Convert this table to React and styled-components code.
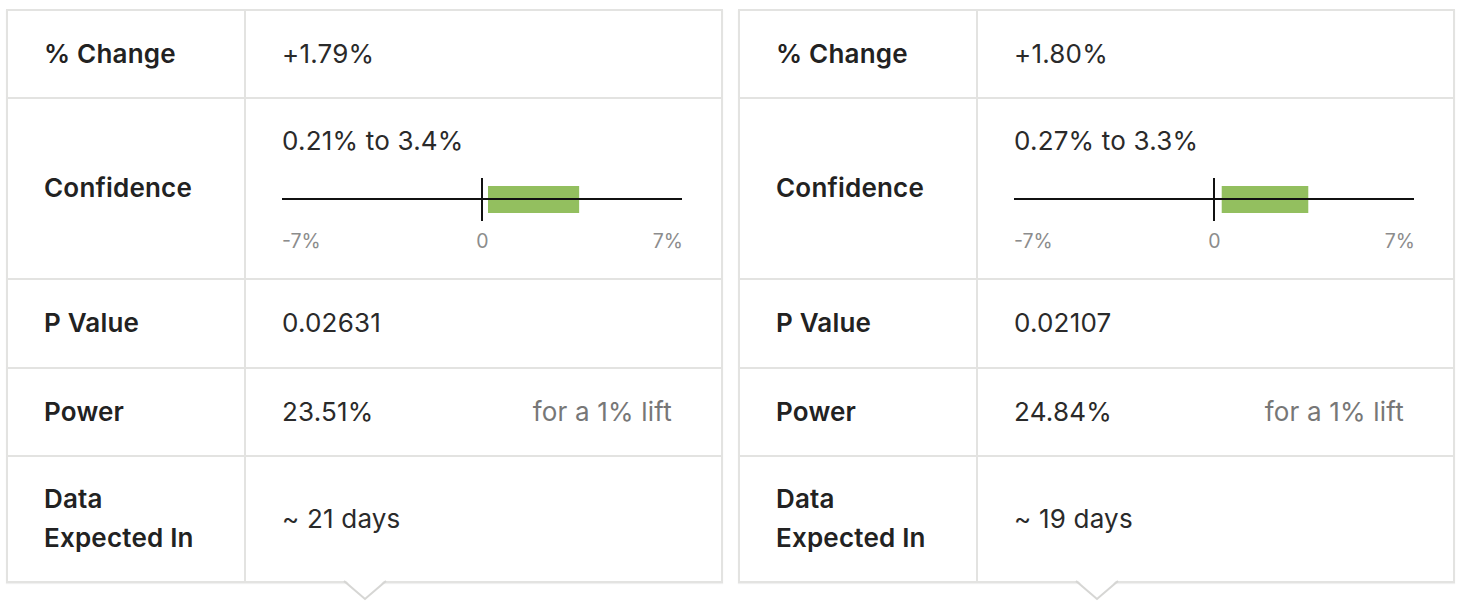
import React from 'react';
import styled, { createGlobalStyle } from 'styled-components';

const GlobalStyle = createGlobalStyle`
  html, body {
    margin: 0;
    padding: 0;
    background: #ffffff;
  }
  body {
    font-family: Inter, "Open Sans", "Liberation Sans", sans-serif;
    color: #252525;
  }
`;

const Page = styled.div`
  display: flex;
  align-items: flex-start;
  gap: 15px;
  padding: 9px 6px 30px 6px;
  min-height: 100vh;
  box-sizing: border-box;
`;

const Card = styled.div`
  position: relative;
  width: 717px;
  box-sizing: border-box;
  border: 2px solid #e3e3e1;
  background: #fff;
  box-shadow: 0 1px 1px rgba(0, 0, 0, 0.06);
`;

const Pointer = styled.svg`
  position: absolute;
  left: 50%;
  top: 100%;
  width: 42px;
  height: 20px;
  margin-left: -21px;
  overflow: visible;
  z-index: 2;
`;

const Row = styled.div`
  display: grid;
  grid-template-columns: 238px 1fr;
  height: ${p => p.$h}px;
  box-sizing: border-box;
  border-bottom: ${p => (p.$last ? 'none' : '2px solid #e3e3e1')};
`;

const Label = styled.div`
  display: flex;
  align-items: center;
  padding: 0 30px 2px 36px;
  border-right: 2px solid #e3e3e1;
  font-size: 26px;
  font-weight: 600;
  letter-spacing: 0.2px;
  line-height: 39px;
  color: #222;
`;

const Value = styled.div`
  display: flex;
  flex-direction: ${p => (p.$column ? 'column' : 'row')};
  justify-content: ${p => (p.$column ? 'center' : 'space-between')};
  align-items: ${p => (p.$column ? 'flex-start' : 'center')};
  padding: 0 49px 2px 36px;
  font-size: 26px;
  letter-spacing: 0.2px;
  color: #2a2a2a;
`;

const Note = styled.span`
  color: #777;
`;

const Range = styled.div`
  line-height: 30px;
  margin-top: 4px;
`;

const Chart = styled.div`
  width: 401px;
  margin-top: 22px;
`;

const Ticks = styled.div`
  display: grid;
  grid-template-columns: 1fr auto 1fr;
  margin-top: 2px;
  font-size: 19.5px;
  letter-spacing: 0;
  line-height: 24px;
  color: #8c8c8c;

  span:last-child {
    text-align: right;
  }
`;

const MIN = -7;
const MAX = 7;
const W = 400;

const Interval = ({ lo, hi }) => {
  const x = v => ((v - MIN) / (MAX - MIN)) * W;
  return (
    <Chart>
      <svg width="401" height="43" viewBox="0 0 401 43">
        <rect x={x(lo)} y="8" width={x(hi) - x(lo)} height="27" fill="#93bf5f" />
        <line x1="0" y1="21" x2="400" y2="21" stroke="#111" strokeWidth="2" />
        <line x1={x(0)} y1="0" x2={x(0)} y2="43" stroke="#111" strokeWidth="2" />
      </svg>
      <Ticks>
        <span>-7%</span>
        <span>0</span>
        <span>7%</span>
      </Ticks>
    </Chart>
  );
};

const Result = ({ change, lo, hi, range, p, power, days }) => (
  <Card>
    <Row $h={88}>
      <Label>% Change</Label>
      <Value>{change}</Value>
    </Row>
    <Row $h={181}>
      <Label>Confidence</Label>
      <Value $column>
        <Range>{range}</Range>
        <Interval lo={lo} hi={hi} />
      </Value>
    </Row>
    <Row $h={89}>
      <Label>P Value</Label>
      <Value>{p}</Value>
    </Row>
    <Row $h={88}>
      <Label>Power</Label>
      <Value>
        <span>{power}</span>
        <Note>for a 1% lift</Note>
      </Value>
    </Row>
    <Row $h={124} $last>
      <Label>Data Expected In</Label>
      <Value>{days}</Value>
    </Row>
    <Pointer viewBox="0 0 42 20">
      <polygon points="2,0 21,17 40,0" fill="#ffffff" />
      <polyline points="0,0 21,18 42,0" fill="none" stroke="#d6d6d4" strokeWidth="2" />
    </Pointer>
  </Card>
);

const App = () => (
  <>
    <GlobalStyle />
    <Page>
      <Result change="+1.79%" range="0.21% to 3.4%" lo={0.21} hi={3.4} p="0.02631" power="23.51%" days="~ 21 days" />
      <Result change="+1.80%" range="0.27% to 3.3%" lo={0.27} hi={3.3} p="0.02107" power="24.84%" days="~ 19 days" />
    </Page>
  </>
);

export default App;
